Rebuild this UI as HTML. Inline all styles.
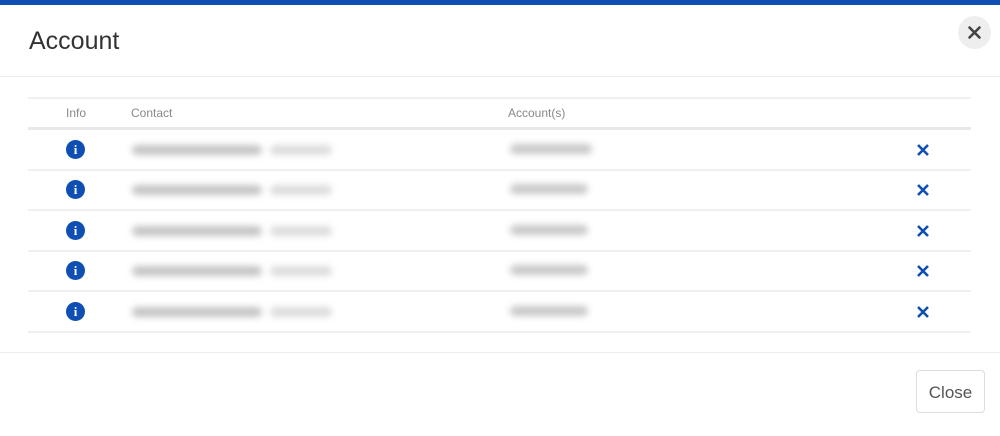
<!DOCTYPE html>
<html><head><style>
body{margin:0;width:1000px;height:436px;background:#fff;font-family:"Liberation Sans",sans-serif;position:relative;overflow:hidden}
.top{position:absolute;left:0;top:0;width:1000px;height:5px;background:#0f4fb3}
h1{position:absolute;left:29px;top:27px;margin:0;font-weight:normal;font-size:25px;color:#333}
.xc{position:absolute;left:958px;top:16px;width:33px;height:33px;border-radius:50%;background:#eeeeee}
.hl{position:absolute;left:0;width:1000px;height:1px;background:#ececec}
.th{position:absolute;top:106px;font-size:12px;color:#888}
.rl{position:absolute;left:28px;width:943px;height:2px;background:#f0f0f0}
.info{position:absolute;left:66px;width:19px;height:19px;border-radius:50%;background:#0f4fb3;color:#fff;font:bold 13px "Liberation Serif",serif;text-align:center;line-height:19px}
.b{position:absolute;height:10px;border-radius:5px;filter:blur(3.5px)}
.btn{position:absolute;left:916px;top:370px;width:69px;height:43px;border:1px solid #ddd;border-radius:4px;font-size:17px;color:#555;text-align:center;line-height:43px;box-sizing:border-box}
</style></head><body>
<div class="top"></div>
<h1>Account</h1>
<div class="xc"><svg width="33" height="33"><path d="M11.5 11.5L21.5 21.5M21.5 11.5L11.5 21.5" stroke="#444" stroke-width="2.6" stroke-linecap="round"/></svg></div>
<div class="hl" style="top:76px"></div>
<div class="rl" style="top:97px"></div>
<div class="th" style="left:66px">Info</div>
<div class="th" style="left:131px">Contact</div>
<div class="th" style="left:508px">Account(s)</div>
<div class="rl" style="top:127px;height:3px;background:#e8e8e8"></div>
<div id="rows"></div>
<script>
var h='';var ys=[150,190,231,271,312];
ys.forEach(function(y,i){
h+='<div class="info" style="top:'+(y-10)+'px">i</div>';
h+='<div class="b" style="left:132px;top:'+(y-5)+'px;width:130px;background:#c4c4c4"></div>';
h+='<div class="b" style="left:270px;top:'+(y-5)+'px;width:62px;background:#dcdcdc"></div>';
h+='<div class="b" style="left:510px;top:'+(y-6)+'px;width:'+(i==0?82:78)+'px;background:#c8c8c8"></div>';
h+='<svg style="position:absolute;left:916px;top:'+(y-7)+'px" width="14" height="14"><path d="M2 2L12 12M12 2L2 12" stroke="#0f4fb3" stroke-width="2.6"/></svg>';
h+='<div class="rl" style="top:'+(y+19)+'px"></div>';
});
document.getElementById('rows').innerHTML=h;
</script>
<div class="hl" style="top:352px"></div>
<div class="btn">Close</div>
</body></html>
